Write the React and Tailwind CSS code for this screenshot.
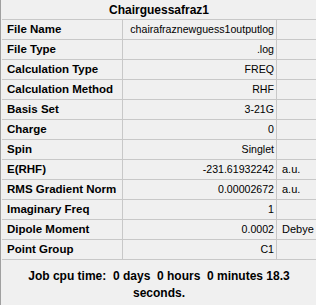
import React from "react";

const rows = [
  { label: "File Name", value: "chairafraznewguess1outputlog" },
  { label: "File Type", value: ".log" },
  { label: "Calculation Type", value: "FREQ" },
  { label: "Calculation Method", value: "RHF" },
  { label: "Basis Set", value: "3-21G" },
  { label: "Charge", value: "0" },
  { label: "Spin", value: "Singlet" },
  { label: "E(RHF)", value: "-231.61932242", unit: "a.u." },
  { label: "RMS Gradient Norm", value: "0.00002672", unit: "a.u." },
  { label: "Imaginary Freq", value: "1" },
  { label: "Dipole Moment", value: "0.0002", unit: "Debye" },
  { label: "Point Group", value: "C1" },
];

const App = () => {
  return (
    <div
      className="w-[316px] h-[305px] overflow-hidden bg-[#f0f0f0] border-l border-[#a0a0a0] text-[11px] text-black"
      style={{ fontFamily: '"Liberation Sans", Arial, sans-serif' }}
    >
      <div className="pl-px">
        <div className="h-[20px] border-b border-[#c8c8c8] flex items-center justify-center font-bold text-[12px]">
          Chairguessafraz1
        </div>

        <div className="grid grid-cols-[121px_154px_1fr]">
          {rows.map((row) => (
            <React.Fragment key={row.label}>
              <div className="h-[20px] border-b border-r border-[#c8c8c8] flex items-center pl-[5px] font-bold text-[11.5px] whitespace-nowrap">
                {row.label}
              </div>
              <div className="h-[20px] border-b border-r border-[#c8c8c8] flex items-center justify-end pr-[2px] text-[10.6px] whitespace-nowrap">
                {row.value}
              </div>
              <div className="h-[20px] border-b border-[#c8c8c8] flex items-center pl-[5px] whitespace-nowrap">
                {row.unit}
              </div>
            </React.Fragment>
          ))}
        </div>

        <div className="pt-[8px] text-center font-bold text-[12px] leading-[17px] whitespace-pre">
          {"Job cpu time:  0 days  0 hours  0 minutes 18.3\nseconds."}
        </div>
      </div>
    </div>
  );
};

export default App;
